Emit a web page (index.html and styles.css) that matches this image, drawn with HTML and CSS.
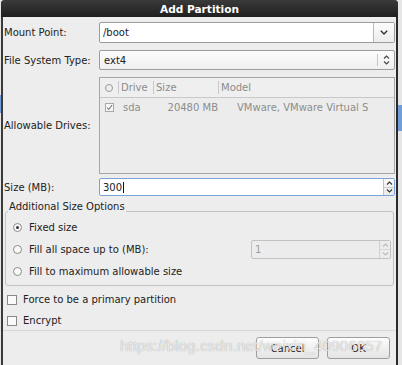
FILE: index.html
```html
<!DOCTYPE html>
<html lang="en">
<head>
    <meta charset="UTF-8">
    <title>Add Partition</title>
    <link rel="stylesheet" href="styles.css">
</head>
<body>
    <div class="backdrop-blue left"></div>
    <div class="backdrop-blue right"></div>
    <div class="dialog">
        <div class="titlebar">Add Partition</div>
        <div class="content">
            <div class="row mount-row">
                <div class="label">Mount Point:</div>
                <div class="combo-entry">
                    <div class="entry-text">/boot</div>
                    <div class="combo-btn">
                        <svg width="8" height="5" viewBox="0 0 8 5"><polyline points="0.8,0.8 4,4 7.2,0.8" fill="none" stroke="#333" stroke-width="1.4"/></svg>
                    </div>
                </div>
            </div>
            <div class="row fs-row">
                <div class="label">File System Type:</div>
                <div class="combo-box">
                    <div class="entry-text">ext4</div>
                    <div class="combo-arrows">
                        <svg width="7" height="10" viewBox="0 0 7 10"><polyline points="1,3.5 3.5,1 6,3.5" fill="none" stroke="#444" stroke-width="1.1"/><polyline points="1,6.5 3.5,9 6,6.5" fill="none" stroke="#444" stroke-width="1.1"/></svg>
                    </div>
                </div>
            </div>
            <div class="row drives-row">
                <div class="label">Allowable Drives:</div>
                <div class="tree">
                    <div class="tree-head">
                        <div class="col c1"><span class="radio-mini"></span></div>
                        <div class="col c2">Drive</div>
                        <div class="col c3">Size</div>
                        <div class="col c4">Model</div>
                    </div>
                    <div class="tree-row">
                        <div class="cell c1"><span class="check-mini">
                            <svg width="7" height="7" viewBox="0 0 7 7"><polyline points="1,3.6 2.8,5.4 6,1.2" fill="none" stroke="#888" stroke-width="1.2"/></svg>
                        </span></div>
                        <div class="cell c2">sda</div>
                        <div class="cell c3 num">20480 MB</div>
                        <div class="cell c4">VMware, VMware Virtual S</div>
                    </div>
                </div>
            </div>
            <div class="row size-row">
                <div class="label">Size (MB):</div>
                <div class="spin focused">
                    <div class="entry-text">300<span class="caret"></span></div>
                    <div class="spin-btns">
                        <div class="spin-up"><svg width="7" height="4" viewBox="0 0 7 4"><polyline points="1,3.5 3.5,1 6,3.5" fill="none" stroke="#333" stroke-width="1.1"/></svg></div>
                        <div class="spin-down"><svg width="7" height="4" viewBox="0 0 7 4"><polyline points="1,0.5 3.5,3 6,0.5" fill="none" stroke="#333" stroke-width="1.1"/></svg></div>
                    </div>
                </div>
            </div>
            <div class="frame">
                <div class="frame-title">Additional Size Options</div>
                <div class="option">
                    <span class="radio checked"></span>
                    <span>Fixed size</span>
                </div>
                <div class="option">
                    <span class="radio"></span>
                    <span class="option-text">Fill all space up to (MB):</span>
                    <div class="spin disabled">
                        <div class="entry-text">1</div>
                        <div class="spin-btns">
                            <div class="spin-up"><svg width="7" height="4" viewBox="0 0 7 4"><polyline points="1,3.5 3.5,1 6,3.5" fill="none" stroke="#bbb" stroke-width="1.1"/></svg></div>
                            <div class="spin-down"><svg width="7" height="4" viewBox="0 0 7 4"><polyline points="1,0.5 3.5,3 6,0.5" fill="none" stroke="#bbb" stroke-width="1.1"/></svg></div>
                        </div>
                    </div>
                </div>
                <div class="option">
                    <span class="radio"></span>
                    <span>Fill to maximum allowable size</span>
                </div>
            </div>
            <div class="check-row first">
                <span class="checkbox"></span>
                <span>Force to be a primary partition</span>
            </div>
            <div class="check-row">
                <span class="checkbox"></span>
                <span>Encrypt</span>
            </div>
            <div class="separator"></div>
            <div class="buttons">
                <button class="btn">Cancel</button>
                <button class="btn">OK</button>
            </div>
        </div>
        <div class="watermark">https://blog.csdn.net/weixin_40906057</div>
    </div>
</body>
</html>
```

FILE: styles.css
```css
body {
    margin: 0;
    width: 402px;
    height: 365px;
    overflow: hidden;
    background-color: #e6e6e6;
    font-family: "DejaVu Sans", sans-serif;
    font-size: 10px;
    color: #222;
    position: relative;
}
.backdrop-blue {
    position: absolute;
    background-color: #6f9fd6;
}
.backdrop-blue.left { left: 0; top: 95px; width: 1px; height: 18px; }
.backdrop-blue.right { left: 397px; top: 105px; width: 5px; height: 26px; }
.dialog {
    position: relative;
    margin-left: 1px;
    width: 393px;
    height: 380px;
    background-color: #ededed;
    border-left: 2px solid #3a3a3a;
    border-right: 2px solid #2a2a2a;
    border-radius: 4px 4px 0 0;
}
.titlebar {
    height: 17px;
    margin: 0 -2px;
    border-radius: 4px 4px 0 0;
    background: linear-gradient(#3a3a3a, #1f1f1f);
    color: #fff;
    font-weight: bold;
    font-size: 10.6px;
    line-height: 18px;
    text-align: center;
}
.content {
    padding: 0 1px 0 0;
}
.row {
    display: flex;
    align-items: center;
}
.label {
    width: 96px;
    flex-shrink: 0;
    padding-left: 1px;
    box-sizing: border-box;
}
.mount-row { margin-top: 5px; height: 21px; }
.fs-row { margin-top: 7px; height: 20px; }
.drives-row { margin-top: 7px; height: 97px; }
.size-row { margin-top: 4px; height: 18px; }

.combo-entry, .combo-box, .spin {
    flex: 1;
    height: 100%;
    display: flex;
    box-sizing: border-box;
    border: 1px solid #9c9c9c;
    border-radius: 2px;
    background-color: #fff;
}
.entry-text {
    flex: 1;
    display: flex;
    align-items: center;
    padding-left: 3px;
}
.combo-btn {
    width: 20px;
    border-left: 1px solid #b8b8b8;
    background: linear-gradient(#fdfdfd, #ececec);
    display: flex;
    align-items: center;
    justify-content: center;
}
.combo-box {
    background: linear-gradient(#fcfcfc, #f0f0f0);
}
.combo-box .entry-text { padding-left: 4px; }
.combo-arrows {
    width: 16px;
    margin: 3px 0;
    border-left: 1px solid #c4c4c4;
    display: flex;
    align-items: center;
    justify-content: center;
}

.tree {
    flex: 1;
    height: 100%;
    box-sizing: border-box;
    border: 1px solid #a6a6a6;
    background-color: #ececec;
    color: #8c8c8c;
}
.tree-head {
    display: flex;
    height: 19px;
    border-bottom: 1px solid #c8c8c8;
    background-color: #efefef;
}
.col, .cell {
    display: flex;
    align-items: center;
    box-sizing: border-box;
}
.col { border-right: 1px solid #c8c8c8; margin: 3px 0; padding-left: 2px; }
.col.c4 { border-right: none; }
.c1 { width: 19px; justify-content: center; padding-left: 0; }
.c2 { width: 35px; }
.c3 { width: 65px; }
.c4 { flex: 1; }
.radio-mini {
    width: 6px;
    height: 6px;
    border: 1px solid #9a9a9a;
    border-radius: 50%;
}
.tree-row {
    display: flex;
    height: 18px;
}
.cell.c1 { padding-left: 0; }
.cell.c2 { padding-left: 4px; }
.cell.c3.num { justify-content: flex-end; padding-right: 1px; }
.cell.c4 { padding-left: 18px; white-space: nowrap; overflow: hidden; }
.check-mini {
    width: 7px;
    height: 7px;
    border: 1px solid #a8a8a8;
    background-color: #f6f6f6;
    display: flex;
    align-items: center;
    justify-content: center;
}

.spin.focused { border-color: #7aa4d8; }
.caret {
    display: inline-block;
    width: 1px;
    height: 11px;
    margin-left: 1px;
    background-color: #111;
}
.spin-btns {
    width: 10px;
    display: flex;
    flex-direction: column;
    border-left: 1px solid #c0c0c0;
    background: linear-gradient(#fafafa, #e9e9e9);
}
.spin-up, .spin-down {
    flex: 1;
    display: flex;
    align-items: center;
    justify-content: center;
}
.spin-up { border-bottom: 1px solid #cfcfcf; }

.frame {
    margin: 15px 1px 0 2px;
    height: 75px;
    box-sizing: border-box;
    border: 1px solid #c2c2c2;
    border-radius: 3px;
    padding-left: 3px;
}
.frame-title {
    display: table;
    margin-top: -11px;
    margin-left: -1px;
    padding: 0 1px;
    line-height: 12px;
    background-color: #ededed;
}
.option {
    display: flex;
    align-items: center;
    height: 22px;
}
.frame-title + .option { margin-top: 3px; }
.radio {
    width: 7px;
    height: 7px;
    border: 1px solid #8a8a8a;
    border-radius: 50%;
    background-color: #fafafa;
    margin: 0 7px 0 4px;
    position: relative;
}
.radio.checked::after {
    content: "";
    position: absolute;
    left: 2px;
    top: 2px;
    width: 3px;
    height: 3px;
    border-radius: 50%;
    background-color: #333;
}
.option-text { width: 222px; }
.spin.disabled {
    flex: none;
    width: 140px;
    height: 19px;
    border-color: #c2c2c2;
    background-color: #ececec;
    color: #9c9c9c;
}
.spin.disabled .spin-btns { background: #ececec; border-left-color: #d0d0d0; }
.spin.disabled .spin-up { border-bottom-color: #d8d8d8; }

.check-row {
    display: flex;
    align-items: center;
    height: 21px;
    padding-left: 4px;
}
.check-row.first { margin-top: 3px; }
.checkbox {
    width: 8px;
    height: 8px;
    border: 1px solid #888;
    background-color: #fafafa;
    margin-right: 6px;
}
.separator {
    height: 1px;
    margin-top: -1px;
    background-color: #d6d6d6;
}
.buttons {
    display: flex;
    justify-content: flex-end;
    gap: 8px;
    padding: 6px 5px 0 0;
}
.btn {
    width: 63px;
    height: 22px;
    font-family: "DejaVu Sans", sans-serif;
    font-size: 10px;
    color: #222;
    border: 1px solid #9e9e9e;
    border-radius: 3px;
    background: linear-gradient(#fdfdfd, #e4e4e4);
    padding: 0;
}
.watermark {
    position: absolute;
    left: 117px;
    top: 337px;
    font-family: "Liberation Sans", sans-serif;
    font-size: 15px;
    color: rgba(255, 255, 255, 0.75);
    text-shadow: 0 0 1px rgba(90, 90, 90, 0.6);
    white-space: nowrap;
    letter-spacing: 0.2px;
}
```
